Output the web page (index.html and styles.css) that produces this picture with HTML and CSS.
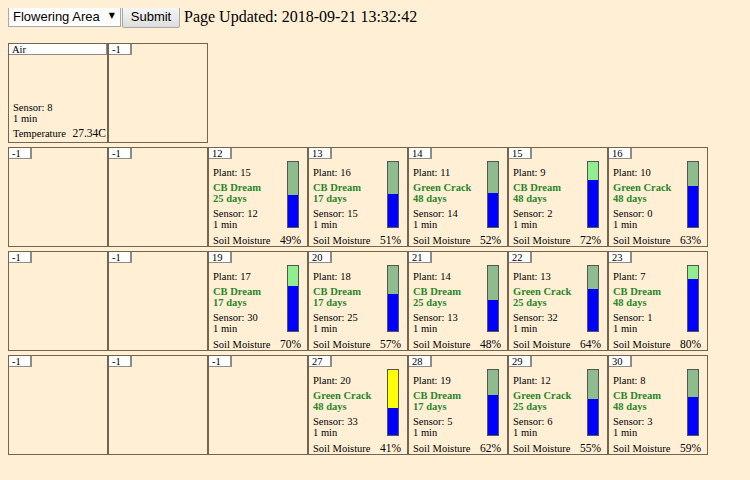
FILE: index.html
```html
<!DOCTYPE html>
<html>
<head>
<meta charset="utf-8">
<title>Flowering Area</title>
<link rel="stylesheet" href="styles.css">
</head>
<body>
<form class="top">
  <span class="pick"><select><option>Flowering Area</option></select></span>
  <button type="button">Submit</button>
  <span class="updated">Page Updated: 2018-09-21 13:32:42</span>
</form>
<div class="grid">
  <div class="row">
    <div class="cell">
      <div class="tag wide">Air</div>
      <div class="air">
        <p>Sensor: 8<br>1 min</p>
      </div>
      <div class="foot air-foot"><span>Temperature</span><span class="val">27.34C</span></div>
    </div>
    <div class="cell"><div class="tag">-1</div></div>
  </div>

  <div class="row">
    <div class="cell"><div class="tag">-1</div></div>
    <div class="cell"><div class="tag">-1</div></div>
    <div class="cell">
      <div class="tag">12</div>
      <div class="main">
        <div class="info"><p>Plant: 15</p><p class="strain">CB Dream<br>25 days</p><p>Sensor: 12<br>1 min</p></div>
        <div class="bar normal"><div class="fill" style="height:49%"></div></div>
      </div>
      <div class="foot"><span>Soil Moisture</span><span class="val">49%</span></div>
    </div>
    <div class="cell">
      <div class="tag">13</div>
      <div class="main">
        <div class="info"><p>Plant: 16</p><p class="strain">CB Dream<br>17 days</p><p>Sensor: 15<br>1 min</p></div>
        <div class="bar normal"><div class="fill" style="height:51%"></div></div>
      </div>
      <div class="foot"><span>Soil Moisture</span><span class="val">51%</span></div>
    </div>
    <div class="cell">
      <div class="tag">14</div>
      <div class="main">
        <div class="info"><p>Plant: 11</p><p class="strain">Green Crack<br>48 days</p><p>Sensor: 14<br>1 min</p></div>
        <div class="bar normal"><div class="fill" style="height:52%"></div></div>
      </div>
      <div class="foot"><span>Soil Moisture</span><span class="val">52%</span></div>
    </div>
    <div class="cell">
      <div class="tag">15</div>
      <div class="main">
        <div class="info"><p>Plant: 9</p><p class="strain">CB Dream<br>48 days</p><p>Sensor: 2<br>1 min</p></div>
        <div class="bar wet"><div class="fill" style="height:72%"></div></div>
      </div>
      <div class="foot"><span>Soil Moisture</span><span class="val">72%</span></div>
    </div>
    <div class="cell">
      <div class="tag">16</div>
      <div class="main">
        <div class="info"><p>Plant: 10</p><p class="strain">Green Crack<br>48 days</p><p>Sensor: 0<br>1 min</p></div>
        <div class="bar normal"><div class="fill" style="height:63%"></div></div>
      </div>
      <div class="foot"><span>Soil Moisture</span><span class="val">63%</span></div>
    </div>
  </div>

  <div class="row">
    <div class="cell"><div class="tag">-1</div></div>
    <div class="cell"><div class="tag">-1</div></div>
    <div class="cell">
      <div class="tag">19</div>
      <div class="main">
        <div class="info"><p>Plant: 17</p><p class="strain">CB Dream<br>17 days</p><p>Sensor: 30<br>1 min</p></div>
        <div class="bar wet"><div class="fill" style="height:70%"></div></div>
      </div>
      <div class="foot"><span>Soil Moisture</span><span class="val">70%</span></div>
    </div>
    <div class="cell">
      <div class="tag">20</div>
      <div class="main">
        <div class="info"><p>Plant: 18</p><p class="strain">CB Dream<br>17 days</p><p>Sensor: 25<br>1 min</p></div>
        <div class="bar normal"><div class="fill" style="height:57%"></div></div>
      </div>
      <div class="foot"><span>Soil Moisture</span><span class="val">57%</span></div>
    </div>
    <div class="cell">
      <div class="tag">21</div>
      <div class="main">
        <div class="info"><p>Plant: 14</p><p class="strain">CB Dream<br>25 days</p><p>Sensor: 13<br>1 min</p></div>
        <div class="bar normal"><div class="fill" style="height:48%"></div></div>
      </div>
      <div class="foot"><span>Soil Moisture</span><span class="val">48%</span></div>
    </div>
    <div class="cell">
      <div class="tag">22</div>
      <div class="main">
        <div class="info"><p>Plant: 13</p><p class="strain">Green Crack<br>25 days</p><p>Sensor: 32<br>1 min</p></div>
        <div class="bar normal"><div class="fill" style="height:64%"></div></div>
      </div>
      <div class="foot"><span>Soil Moisture</span><span class="val">64%</span></div>
    </div>
    <div class="cell">
      <div class="tag">23</div>
      <div class="main">
        <div class="info"><p>Plant: 7</p><p class="strain">CB Dream<br>48 days</p><p>Sensor: 1<br>1 min</p></div>
        <div class="bar wet"><div class="fill" style="height:80%"></div></div>
      </div>
      <div class="foot"><span>Soil Moisture</span><span class="val">80%</span></div>
    </div>
  </div>

  <div class="row">
    <div class="cell"><div class="tag">-1</div></div>
    <div class="cell"><div class="tag">-1</div></div>
    <div class="cell"><div class="tag">-1</div></div>
    <div class="cell">
      <div class="tag">27</div>
      <div class="main">
        <div class="info"><p>Plant: 20</p><p class="strain">Green Crack<br>48 days</p><p>Sensor: 33<br>1 min</p></div>
        <div class="bar dry"><div class="fill" style="height:41%"></div></div>
      </div>
      <div class="foot"><span>Soil Moisture</span><span class="val">41%</span></div>
    </div>
    <div class="cell">
      <div class="tag">28</div>
      <div class="main">
        <div class="info"><p>Plant: 19</p><p class="strain">CB Dream<br>17 days</p><p>Sensor: 5<br>1 min</p></div>
        <div class="bar normal"><div class="fill" style="height:62%"></div></div>
      </div>
      <div class="foot"><span>Soil Moisture</span><span class="val">62%</span></div>
    </div>
    <div class="cell">
      <div class="tag">29</div>
      <div class="main">
        <div class="info"><p>Plant: 12</p><p class="strain">Green Crack<br>25 days</p><p>Sensor: 6<br>1 min</p></div>
        <div class="bar normal"><div class="fill" style="height:55%"></div></div>
      </div>
      <div class="foot"><span>Soil Moisture</span><span class="val">55%</span></div>
    </div>
    <div class="cell">
      <div class="tag">30</div>
      <div class="main">
        <div class="info"><p>Plant: 8</p><p class="strain">CB Dream<br>48 days</p><p>Sensor: 3<br>1 min</p></div>
        <div class="bar normal"><div class="fill" style="height:59%"></div></div>
      </div>
      <div class="foot"><span>Soil Moisture</span><span class="val">59%</span></div>
    </div>
  </div>
</div>
</body>
</html>
```
FILE: styles.css
```css
body {
  margin: 8px;
  background: #ffefd5;
  color: #000;
  font-family: "Liberation Serif", "Times New Roman", serif;
}

.top {
  display: flex;
  align-items: center;
  height: 21px;
  margin: -2px 0 0 0;
}

.pick {
  position: relative;
  display: inline-block;
}

.pick select {
  -webkit-appearance: none;
  appearance: none;
  width: 113px;
  height: 21px;
  margin: 0;
  padding: 0 0 0 4px;
  border: 1px solid #a8a8a8;
  border-radius: 0;
  background: #fff;
  color: #000;
  font-family: "Liberation Sans", Arial, sans-serif;
  font-size: 13px;
}

.pick::after {
  content: "\25BC";
  position: absolute;
  right: 6px;
  top: 5px;
  font-family: "DejaVu Sans", sans-serif;
  font-size: 8px;
  line-height: 10px;
  pointer-events: none;
}

.top button {
  width: 58px;
  height: 22px;
  margin: 0 0 0 1px;
  padding: 0;
  border: 1px solid #a8a8a8;
  border-radius: 2px;
  background: linear-gradient(#f7f7f7, #dddddd);
  color: #000;
  font-family: "Liberation Sans", Arial, sans-serif;
  font-size: 13px;
}

.updated {
  margin-left: 4px;
  font-size: 16px;
}

.grid {
  display: flex;
  flex-direction: column;
  gap: 4px;
  margin-top: 16px;
}

.row {
  display: flex;
}

.cell {
  width: 98px;
  height: 98px;
  border: 1px solid #75654f;
  display: flex;
  flex-direction: column;
  font-size: 10.5px;
  line-height: 11px;
}

.tag {
  align-self: flex-start;
  width: 18px;
  height: 10px;
  padding-left: 3px;
  background: #fff;
  border-right: 2px solid #8c8c8c;
  border-bottom: 1px solid #8c8c8c;
  font-size: 10.5px;
  line-height: 11px;
}

.tag.wide {
  align-self: stretch;
  width: auto;
  border-right-width: 1px;
}

.main {
  flex: 1;
  display: flex;
  justify-content: space-between;
  padding: 0 8px 0 4px;
}

.info {
  padding-top: 8px;
}

.info p,
.air p {
  margin: 0 0 4px;
}

.strain {
  color: #2a862a;
  font-weight: bold;
}

.bar {
  margin-top: 2px;
  width: 10px;
  height: 65px;
  border: 1px solid #555;
  display: flex;
  flex-direction: column;
  justify-content: flex-end;
}

.bar.normal { background: #8fbc8f; }
.bar.wet { background: #90ee90; }
.bar.dry { background: #ffff00; }

.fill {
  background: #0000ff;
}

.air {
  flex: 1;
  display: flex;
  flex-direction: column;
  justify-content: flex-end;
  padding-left: 4px;
}

.air p {
  margin-bottom: 3px;
}

.foot {
  display: flex;
  justify-content: space-between;
  align-items: baseline;
  padding: 0 6px 2px 4px;
  line-height: 12px;
}

.foot.air-foot {
  padding-right: 1px;
}

.foot .val {
  font-size: 11.5px;
}
```
